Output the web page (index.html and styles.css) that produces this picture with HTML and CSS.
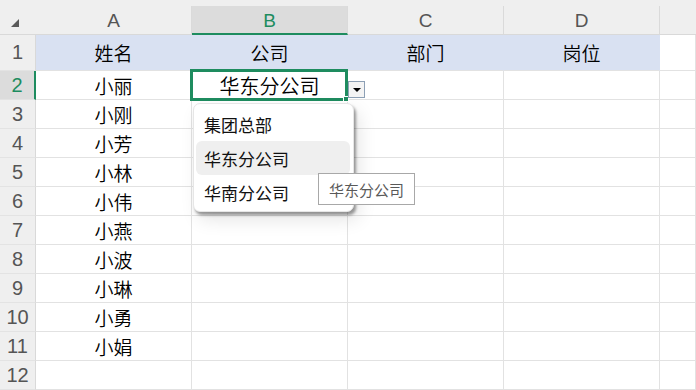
FILE: index.html
```html
<!DOCTYPE html>
<html lang="zh-CN">
<head>
<meta charset="utf-8">
<link rel="stylesheet" href="styles.css">
</head>
<body>
<div class="sheet">
  <div class="strip"></div>

  <div class="h corner"><span class="tri"></span></div>
  <div class="h col">A</div>
  <div class="h col sel">B</div>
  <div class="h col">C</div>
  <div class="h col">D</div>
  <div class="h col last"></div>

  <div class="rh">1</div>
  <div class="c t">姓名</div><div class="c t">公司</div><div class="c t">部门</div><div class="c t">岗位</div><div class="c"></div>

  <div class="rh sel">2</div>
  <div class="c">小丽</div><div class="c big">华东分公司</div><div class="c"></div><div class="c"></div><div class="c"></div>

  <div class="rh">3</div>
  <div class="c">小刚</div><div class="c"></div><div class="c"></div><div class="c"></div><div class="c"></div>

  <div class="rh">4</div>
  <div class="c">小芳</div><div class="c"></div><div class="c"></div><div class="c"></div><div class="c"></div>

  <div class="rh">5</div>
  <div class="c">小林</div><div class="c"></div><div class="c"></div><div class="c"></div><div class="c"></div>

  <div class="rh">6</div>
  <div class="c">小伟</div><div class="c"></div><div class="c"></div><div class="c"></div><div class="c"></div>

  <div class="rh">7</div>
  <div class="c">小燕</div><div class="c"></div><div class="c"></div><div class="c"></div><div class="c"></div>

  <div class="rh">8</div>
  <div class="c">小波</div><div class="c"></div><div class="c"></div><div class="c"></div><div class="c"></div>

  <div class="rh">9</div>
  <div class="c">小琳</div><div class="c"></div><div class="c"></div><div class="c"></div><div class="c"></div>

  <div class="rh">10</div>
  <div class="c">小勇</div><div class="c"></div><div class="c"></div><div class="c"></div><div class="c"></div>

  <div class="rh">11</div>
  <div class="c">小娟</div><div class="c"></div><div class="c"></div><div class="c"></div><div class="c"></div>

  <div class="rh">12</div>
  <div class="c"></div><div class="c"></div><div class="c"></div><div class="c"></div><div class="c"></div>

  <div class="selection"><span class="handle"></span></div>
  <div class="ddbtn"><span class="arrow"></span></div>
  <div class="menu">
    <div class="item">集团总部</div>
    <div class="item hover">华东分公司</div>
    <div class="item">华南分公司</div>
  </div>
  <div class="tip">华东分公司</div>
</div>
</body>
</html>
```

FILE: styles.css
```css
html, body {
  margin: 0;
  padding: 0;
  background: #ffffff;
}

.sheet {
  position: relative;
  width: 696px;
  height: 390px;
  overflow: hidden;
  display: grid;
  grid-template-columns: 36px 156px 156px 156px 156px 1fr;
  grid-template-rows: 6px 29px 36px repeat(11, 29px);
  font-family: "Noto Sans CJK SC", "Noto Sans", sans-serif;
  color: #111;
}

.strip {
  grid-column: 1 / -1;
  background: #efefef;
}

.h {
  background: #efefef;
  border-bottom: 1px solid #d9d9d9;
  box-sizing: border-box;
  display: flex;
  align-items: center;
  justify-content: center;
  font-family: "Liberation Sans", Arial, sans-serif;
  font-size: 19px;
  color: #555;
  padding-top: 2px;
}

.h.col {
  border-right: 1px solid #dadada;
}

.h.col.last {
  border-right: none;
}

.h.sel {
  background: #dcdcdc;
  color: #1e8c5f;
  border-bottom: 2px solid #1e8c5f;
}

.tri {
  width: 0;
  height: 0;
  border-left: 8px solid transparent;
  border-bottom: 8px solid #5a5a5a;
  margin: 4px 0 0 -6px;
}

.rh {
  background: #efefef;
  border-right: 1px solid #d9d9d9;
  border-bottom: 1px solid #e3e3e3;
  box-sizing: border-box;
  display: flex;
  align-items: center;
  justify-content: center;
  font-family: "Liberation Sans", Arial, sans-serif;
  font-size: 20px;
  color: #555;
}

.rh.sel {
  background: #dcdcdc;
  color: #1e8c5f;
  border-right: 2px solid #1e8c5f;
}

.c {
  border-right: 1px solid #e2e2e2;
  border-bottom: 1px solid #e2e2e2;
  box-sizing: border-box;
  display: flex;
  align-items: center;
  justify-content: center;
  font-size: 19px;
  font-weight: 350;
  color: #000;
}

.c.big {
  font-size: 20px;
}

.c.t {
  background: #d9e1f2;
  border-right-color: #d9e1f2;
}

.selection {
  position: absolute;
  left: 190px;
  top: 69px;
  width: 158px;
  height: 32px;
  box-sizing: border-box;
  border: 3px solid #1e8c5f;
}

.handle {
  position: absolute;
  right: -4px;
  bottom: -4px;
  width: 4px;
  height: 4px;
  background: #1e8c5f;
  border: 1px solid #ffffff;
}

.ddbtn {
  position: absolute;
  left: 348px;
  top: 81px;
  width: 17px;
  height: 17px;
  box-sizing: border-box;
  border: 1px solid #8da0b5;
  background: #f4f4f4;
  display: flex;
  align-items: center;
  justify-content: center;
}

.arrow {
  width: 0;
  height: 0;
  border-left: 4px solid transparent;
  border-right: 4px solid transparent;
  border-top: 4px solid #000;
  margin-top: 1px;
}

.menu {
  position: absolute;
  left: 193px;
  top: 103px;
  width: 161px;
  height: 109px;
  box-sizing: border-box;
  padding: 3px 3px 4px 2px;
  background: #fff;
  border: 1px solid #e6e6e6;
  border-radius: 7px;
  box-shadow: 2px 3px 3px rgba(0, 0, 0, 0.38), 5px 8px 18px rgba(0, 0, 0, 0.10);
  display: flex;
  flex-direction: column;
}

.item {
  height: 34px;
  flex: none;
  display: flex;
  align-items: center;
  padding-left: 8px;
  border-radius: 6px;
  font-size: 17px;
  color: #111;
}

.item.hover {
  background: #efefef;
}

.tip {
  position: absolute;
  left: 318px;
  top: 173px;
  width: 97px;
  height: 32px;
  box-sizing: border-box;
  border: 1px solid #a8a8a8;
  background: #fff;
  display: flex;
  align-items: center;
  justify-content: center;
  font-size: 15px;
  color: #595959;
}
```
